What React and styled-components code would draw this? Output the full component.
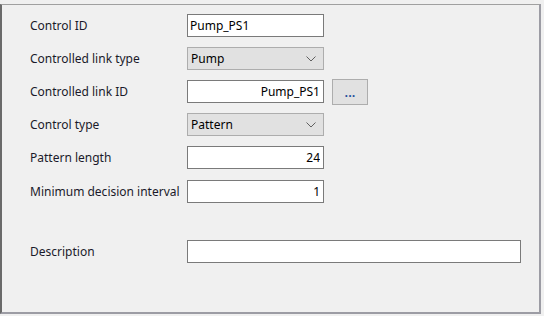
import React from "react";
import styled, { createGlobalStyle } from "styled-components";

const Global = createGlobalStyle`
  html, body {
    margin: 0;
    padding: 0;
    background: #f0f0f0;
  }
  body {
    font-family: "Noto Sans", "DejaVu Sans", sans-serif;
    font-size: 12px;
    color: #000;
  }
`;

const Chevron = () => (
  <svg width="10" height="6" viewBox="0 0 10 6">
    <path d="M0.5 0.5 L5 5 L9.5 0.5" fill="none" stroke="#606060" strokeWidth="1" />
  </svg>
);

const App = () => {
  return (
    <>
      <Global />
      <Frame>
        <Row>
          <Label>Control ID</Label>
          <TextBox value="Pump_PS1" readOnly />
        </Row>
        <Row>
          <Label>Controlled link type</Label>
          <Combo>
            <span>Pump</span>
            <Chevron />
          </Combo>
        </Row>
        <Row>
          <Label>Controlled link ID</Label>
          <TextBox value="Pump_PS1" align="right" readOnly />
          <Browse>...</Browse>
        </Row>
        <Row>
          <Label>Control type</Label>
          <Combo>
            <span>Pattern</span>
            <Chevron />
          </Combo>
        </Row>
        <Row>
          <Label>Pattern length</Label>
          <TextBox value="24" align="right" readOnly />
        </Row>
        <Row $top={11}>
          <Label>Minimum decision interval</Label>
          <TextBox value="1" align="right" readOnly />
        </Row>
        <Row $top={37}>
          <Label>Description</Label>
          <TextBox value="" $wide readOnly />
        </Row>
      </Frame>
    </>
  );
};

export default App;

const Frame = styled.div`
  box-sizing: border-box;
  margin: 4px 3px 0 0;
  height: 310px;
  border-top: 1px solid #a0a0a0;
  border-left: 2px solid #6a6a6a;
  border-right: 2px solid #9c9ca4;
  border-bottom: 2px solid #9c9ca4;
  padding: 9px 0 0 28px;
  display: flex;
  flex-direction: column;
`;

const Row = styled.div`
  display: flex;
  align-items: center;
  height: 23px;
  margin-top: ${(p) => (p.$top !== undefined ? p.$top : 10)}px;
  &:first-child {
    margin-top: 0;
  }
`;

const Label = styled.div`
  width: 157px;
  flex-shrink: 0;
  white-space: nowrap;
  color: #1a1a2a;
`;

const TextBox = styled.input`
  box-sizing: border-box;
  width: ${(p) => (p.$wide ? "334px" : "137px")};
  height: 23px;
  border: 1px solid #7a7a7a;
  background: #fff;
  padding: 0 3px 0 2px;
  font-family: inherit;
  font-size: 12px;
  color: #000;
  text-align: ${(p) => p.align || "left"};
  outline: none;
`;

const Combo = styled.div`
  box-sizing: border-box;
  width: 137px;
  height: 23px;
  border: 1px solid #adadad;
  background: #e1e1e1;
  display: flex;
  align-items: center;
  justify-content: space-between;
  padding: 0 7px 0 3px;
`;

const Browse = styled.div`
  box-sizing: border-box;
  width: 36px;
  height: 26px;
  margin-left: 8px;
  border: 1px solid #adadad;
  background: #e1e1e1;
  color: #1e4e9a;
  font-size: 13px;
  font-weight: 600;
  display: flex;
  align-items: center;
  justify-content: center;
`;
